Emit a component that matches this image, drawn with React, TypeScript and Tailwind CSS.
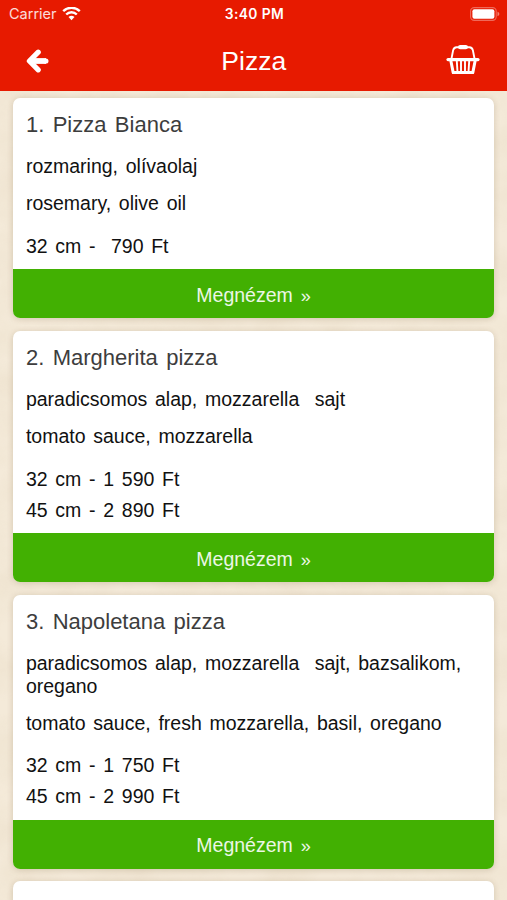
type Pizza = {
  name: string;
  hu: string;
  en: string;
  prices: string[];
};

const pizzas: Pizza[] = [
  {
    name: "1. Pizza Bianca",
    hu: "rozmaring, olívaolaj",
    en: "rosemary, olive oil",
    prices: ["32 cm -  790 Ft"],
  },
  {
    name: "2. Margherita pizza",
    hu: "paradicsomos alap, mozzarella  sajt",
    en: "tomato sauce, mozzarella",
    prices: ["32 cm - 1 590 Ft", "45 cm - 2 890 Ft"],
  },
  {
    name: "3. Napoletana pizza",
    hu: "paradicsomos alap, mozzarella  sajt, bazsalikom, oregano",
    en: "tomato sauce, fresh mozzarella, basil, oregano",
    prices: ["32 cm - 1 750 Ft", "45 cm - 2 990 Ft"],
  },
];

const WifiIcon = () => (
  <svg width="19" height="15" viewBox="0 0 19 15" fill="none" stroke="#fff" strokeWidth="2.4">
    <path d="M1.2 4.2a11.8 11.8 0 0 1 16.6 0" />
    <path d="M4.2 7.5a7.5 7.5 0 0 1 10.6 0" />
    <path d="M9.5 13.2 6.5 10.1a4.3 4.3 0 0 1 6 0Z" fill="#fff" stroke="none" />
  </svg>
);

const BatteryIcon = () => (
  <svg width="30" height="14" viewBox="0 0 30 14">
    <rect x="0.6" y="0.6" width="25.6" height="12.8" rx="3.6" fill="none" stroke="#fff" strokeOpacity="0.35" strokeWidth="1.1" />
    <rect x="2.4" y="2.3" width="22" height="9.4" rx="2" fill="#fff" />
    <path d="M27.5 4.8c2.4.7 2.4 3.7 0 4.4z" fill="#fff" fillOpacity="0.45" />
  </svg>
);

const BackIcon = () => (
  <svg width="24" height="24" viewBox="0 0 24 24" fill="none" stroke="#fff" strokeWidth="5.2" strokeLinecap="round" strokeLinejoin="round">
    <path d="M13.2 3.2 4.4 12l8.8 8.8" />
    <path d="M5 12h16" strokeWidth="5.8" strokeLinecap="butt" />
    <path d="M20.8 12h.1" />
  </svg>
);

const BasketIcon = () => (
  <svg width="34" height="31" viewBox="0 0 34 31" fill="none" stroke="#fff" strokeLinecap="round" strokeLinejoin="round">
    <path d="M5.6 14 7.1 6.4Q7.8 3.4 10.6 3.2H23.4Q26.2 3.4 26.9 6.4L28.4 14" strokeWidth="1.9" />
    <path d="M14.2 3.1h5.6" strokeWidth="4.4" />
    <path d="M2 15.6h30" strokeWidth="3.2" />
    <path d="M4.9 17 7.2 28.6h19.6L29.1 17" strokeWidth="3" />
    <path d="M10.8 17l.7 11M15 17v11M19 17v11M23.2 17l-.7 11" strokeWidth="1.9" />
  </svg>
);

const StatusBar = () => (
  <div className="grid h-7 grid-cols-3 items-center pr-[7px] pl-[9px] font-['Inter',sans-serif] text-white">
    <div className="flex items-center gap-[5px]">
      <span className="text-[14.5px] text-white/85">Carrier</span>
      <WifiIcon />
    </div>
    <span className="text-center text-[13.8px] font-semibold tracking-[0.4px]">3:40 PM</span>
    <div className="flex justify-end">
      <BatteryIcon />
    </div>
  </div>
);

const PaperTexture = () => (
  <svg className="absolute inset-0 h-full w-full">
    <filter id="paper" x="0" y="0" width="100%" height="100%">
      <feTurbulence type="fractalNoise" baseFrequency="0.02 0.025" numOctaves="4" seed="7" />
      <feColorMatrix values="0 0 0 0 0.66  0 0 0 0 0.54  0 0 0 0 0.36  0.7 0 0 0 -0.2" />
    </filter>
    <rect width="100%" height="100%" filter="url(#paper)" opacity="0.38" />
  </svg>
);

const PizzaCard = ({ pizza }: { pizza: Pizza }) => (
  <article className="overflow-hidden rounded-[7px] bg-white shadow-[0_1px_6px_rgba(90,60,20,0.2)]">
    <div className="px-[12.5px] pt-[14.5px] pb-[7.5px] text-[19.5px] leading-[22.5px] whitespace-pre-wrap text-[#111] [word-spacing:2.3px]">
      <h2 className="text-[22px] leading-[26px] text-[#3d3d3d]">{pizza.name}</h2>
      <p className="mt-[17px]">{pizza.hu}</p>
      <p className="mt-[14.5px]">{pizza.en}</p>
      <ul className="mt-[16px]">
        {pizza.prices.map((price) => (
          <li key={price} className="leading-[31px]">{price}</li>
        ))}
      </ul>
    </div>
    <button className="block h-[49px] w-full bg-[#42b002] pt-[3px] text-[19.5px] text-white/90 [word-spacing:2.5px]">
      Megnézem <span className="text-[18px]">»</span>
    </button>
  </article>
);

export default function App() {
  return (
    <div className="flex h-[900px] w-full flex-col overflow-hidden bg-[#f4ead9] font-['Liberation_Sans',Arial,sans-serif]">
      <header className="h-[91px] shrink-0 bg-[#e71a00]">
        <StatusBar />
        <div className="grid h-[63px] grid-cols-[34px_1fr_34px] items-center pr-[27.5px] pl-[25px] text-white">
          <button className="w-6 pt-[3px]">
            <BackIcon />
          </button>
          <h1 className="pt-1 pl-[3px] text-center text-[26.5px]">Pizza</h1>
          <button className="w-[34px] pb-px">
            <BasketIcon />
          </button>
        </div>
      </header>

      <main className="relative flex-1 overflow-hidden">
        <PaperTexture />
        <div className="relative flex flex-col gap-[12.4px] px-[13.4px] pt-[6.9px]">
          {pizzas.map((pizza) => (
            <PizzaCard key={pizza.name} pizza={pizza} />
          ))}
          <div className="h-40 rounded-[7px] bg-white shadow-[0_1px_6px_rgba(90,60,20,0.2)]" />
        </div>
      </main>
    </div>
  );
}
